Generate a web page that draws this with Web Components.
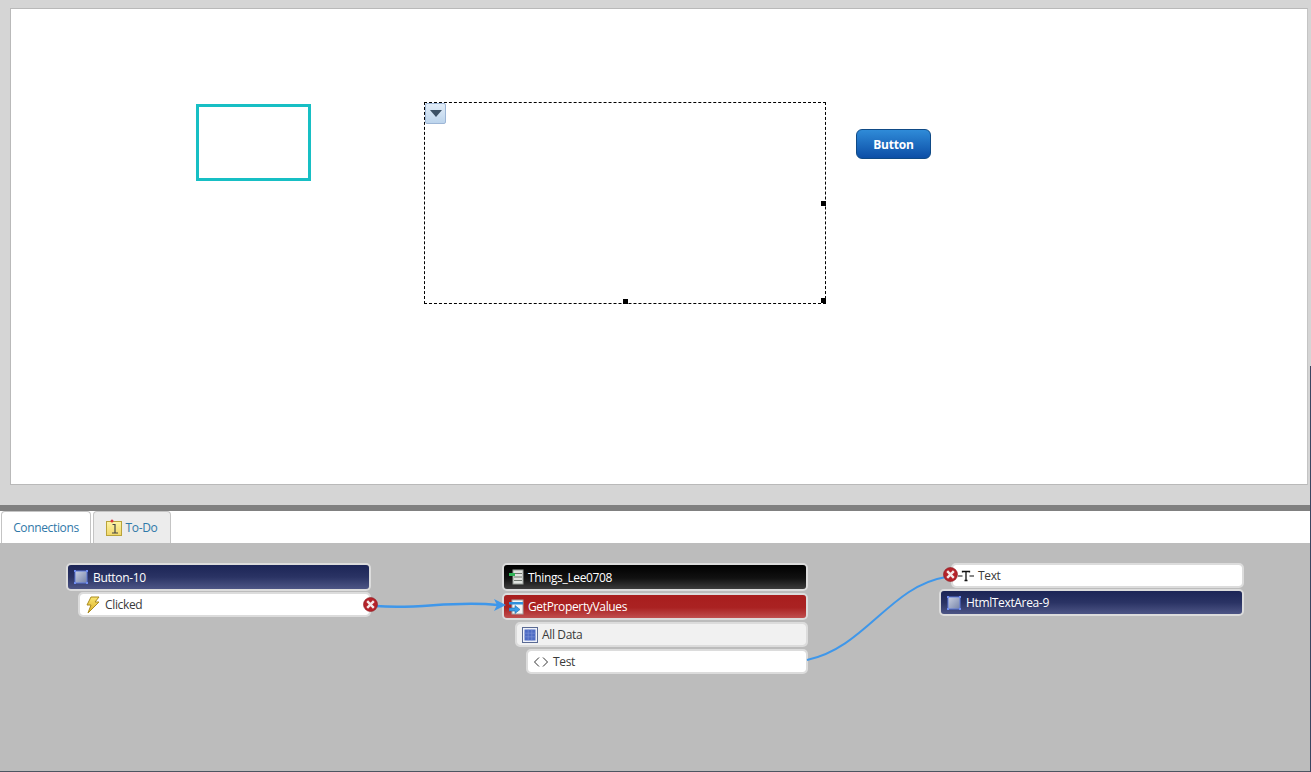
<!DOCTYPE html>
<html>
<head>
<meta charset="utf-8">
<title>Mashup Builder</title>
<style>
  html, body { margin: 0; height: 100%; }
  body { font-family: "Open Sans", "Liberation Sans", sans-serif; overflow: hidden; }
</style>
</head>
<body>

<app-shell>
  <design-surface slot="top"></design-surface>
  <tab-strip slot="tabs"></tab-strip>
  <connection-board slot="bottom"></connection-board>
</app-shell>

<script>
// gradient ids only resolve inside the same shadow tree, so each root gets its own copy
const defs = `<svg width="0" height="0" style="position:absolute"><defs>
  <linearGradient id="glass" x1="0" y1="0" x2="1" y2="1"><stop offset="0" stop-color="#c9d0e2"/><stop offset="1" stop-color="#7583a8"/></linearGradient>
  <linearGradient id="bolt" x1="0" y1="0" x2="0" y2="1"><stop offset="0" stop-color="#f9e672"/><stop offset="1" stop-color="#dcae22"/></linearGradient>
  <linearGradient id="note" x1="0" y1="0" x2="0" y2="1"><stop offset="0" stop-color="#fdf3a6"/><stop offset="1" stop-color="#f0d668"/></linearGradient>
</defs></svg>`;

const widgetIcon = `<svg width="16" height="16" viewBox="0 0 16 16"><rect x="2" y="2" width="12" height="12" fill="url(#glass)" stroke="#5d78d8" stroke-width="1"/><g fill="#6f8cf0"><rect x="1" y="1" width="2" height="2"/><rect x="13" y="1" width="2" height="2"/><rect x="1" y="13" width="2" height="2"/><rect x="13" y="13" width="2" height="2"/></g></svg>`;
const boltIcon = `<svg width="16" height="18" viewBox="0 0 16 18"><path d="M6 1 L14 1 L10 6 L14 6 L3 17 L6 9 L2 9 Z" fill="url(#bolt)" stroke="#a98a20" stroke-width="1" stroke-linejoin="round"/></svg>`;
const thingIcon = `<svg width="16" height="16" viewBox="0 0 16 16"><rect x="4" y="1" width="10" height="14" fill="#dfe3df" stroke="#9a9f9a"/><path d="M5 4.5h8M5 8h8M5 11.5h8" stroke="#6f766f"/><rect x="0" y="4" width="6" height="3" fill="#2fb457"/></svg>`;
const serviceIcon = `<svg width="16" height="16" viewBox="0 0 16 16"><rect x="3" y="1" width="11" height="14" fill="#f4f4f4" stroke="#a5a5a5"/><rect x="0" y="3" width="14" height="2.5" fill="#2f8fdc"/><path d="M0 9h6V6.5l5 4-5 4V12H0z" fill="#3a9be6" stroke="#1d6cab" stroke-width=".6"/></svg>`;
const dataIcon = `<svg width="16" height="16" viewBox="0 0 16 16"><rect x=".5" y=".5" width="15" height="15" fill="#eef1f8" stroke="#5a6a94"/><rect x="2.5" y="2.5" width="11" height="11" fill="#4f6cc4"/><path d="M2.5 6.2h11M2.5 9.8h11M6.2 2.5v11M9.8 2.5v11" stroke="#7f95d8" stroke-width=".6"/></svg>`;
const codeIcon = `<svg width="16" height="12" viewBox="0 0 16 12"><path d="M6 1.5 L1.5 6 L6 10.5 M10 1.5 L14.5 6 L10 10.5" fill="none" stroke="#333" stroke-width="1"/></svg>`;
const textIcon = `<svg width="16" height="12" viewBox="0 0 16 12"><path d="M0 6h4.5M11.5 6h4.5" stroke="#111" stroke-width="1.1"/><path d="M4.5 2.5v-1h7v1M8 1.5V10M6.5 10.5h3" fill="none" stroke="#111" stroke-width="1.3"/></svg>`;
const errorIcon = `<svg width="15" height="15" viewBox="0 0 15 15"><circle cx="7.5" cy="7.5" r="7" fill="#b4232a" stroke="#8c1a20" stroke-width=".6"/><path d="M4.2 4.2 L10.8 10.8 M10.8 4.2 L4.2 10.8" stroke="#f4eaea" stroke-width="2.4"/></svg>`;

class AppShell extends HTMLElement {
  constructor() {
    super();
    this.attachShadow({ mode: "open" }).innerHTML = `
      <style>
        :host { display: flex; flex-direction: column; height: 772px; width: 1311px; position: relative; }
        .sizer { border-top: 6px solid #808080; height: 0; flex: none; }
        .edge { position: absolute; right: 0; top: 366px; bottom: 0; width: 1px; background: #3a4560; }
        .foot { height: 1px; background: #4d5662; flex: none; }
      </style>
      <slot name="top"></slot>
      <div class="sizer"></div>
      <slot name="tabs"></slot>
      <slot name="bottom"></slot>
      <div class="foot"></div>
      <div class="edge"></div>
    `;
  }
}

class DesignSurface extends HTMLElement {
  constructor() {
    super();
    this.attachShadow({ mode: "open" }).innerHTML = `
      <style>
        :host { display: block; height: 505px; flex: none; box-sizing: border-box; background: #d5d5d5; padding: 8px 3px 20px 10px; }
        .paper { position: relative; height: 100%; box-sizing: border-box; background: #fff; border: 1px solid #b9b9b9; border-right-color: #c4c4c4; }
        .panel { position: absolute; left: 185px; top: 95px; width: 115px; height: 77px; box-sizing: border-box; border: 3px solid #17bfc4; }
        .selected { position: absolute; left: 413px; top: 93px; width: 402px; height: 202px; box-sizing: border-box; border: 1px dashed #000; }
        .menu { position: absolute; left: 0; top: 0; width: 21px; height: 21px; box-sizing: border-box; border: 1px solid #9db6d6; border-radius: 2px; background: linear-gradient(#e2edf8, #bcd4ec); display: flex; align-items: center; justify-content: center; }
        .menu i { width: 0; height: 0; border-left: 6px solid transparent; border-right: 6px solid transparent; border-top: 7px solid #3c5166; }
        .grip { position: absolute; width: 5px; height: 5px; background: #000; }
        .btn { position: absolute; left: 845px; top: 120px; width: 75px; height: 30px; box-sizing: border-box; border: 1px solid #0f4a86; border-radius: 6px; background: linear-gradient(#2f8bd8, #0c4ea6); color: #fff; font: bold 12px "Open Sans", "Liberation Sans", sans-serif; letter-spacing: -.2px; display: flex; align-items: center; justify-content: center; }
      </style>
      <div class="paper">
        <div class="panel"></div>
        <div class="selected">
          <div class="menu"><i></i></div>
          <div class="grip" style="right:-1px;top:98px"></div>
          <div class="grip" style="left:198px;bottom:-1px"></div>
          <div class="grip" style="right:-1px;bottom:0"></div>
        </div>
        <div class="btn">Button</div>
      </div>
    `;
  }
}

class TabStrip extends HTMLElement {
  constructor() {
    super();
    this.attachShadow({ mode: "open" }).innerHTML = `
      <style>
        :host { display: flex; height: 32px; flex: none; background: #fff; box-sizing: border-box; padding-left: 1px; gap: 2px; font: 12px "Open Sans", "Liberation Sans", sans-serif; letter-spacing: -.35px; color: #2f78a8; }
        .tab { box-sizing: border-box; height: 32px; border: 1px solid #c4c4c4; border-bottom: 0; border-radius: 4px 4px 0 0; display: flex; align-items: center; justify-content: center; gap: 3px; }
        .on { width: 90px; background: #fff; }
        .off { width: 78px; background: #ececec; padding-right: 1px; }
      </style>
      ${defs}
      <div class="tab on">Connections</div>
      <div class="tab off">
        <svg width="17" height="17" viewBox="0 0 17 17"><rect x=".5" y="2.5" width="15" height="14" fill="url(#note)" stroke="#b9a33a"/><circle cx="6" cy="2" r="1.5" fill="#d8343a"/><path d="M6.5 5.5h2.5v8M6 14h6" fill="none" stroke="#444" stroke-width="1.2"/></svg>
        To-Do
      </div>
    `;
  }
}

class ConnRow extends HTMLElement {
  constructor() {
    super();
    this.attachShadow({ mode: "open" }).innerHTML = `
      <style>
        :host { display: block; box-sizing: border-box; flex: none; height: var(--h, 25px); margin-left: var(--indent, 0); border: 2px solid #dcdcdc; border-radius: 5px; font: 12px "Open Sans", "Liberation Sans", sans-serif; letter-spacing: -.35px; }
        .in { height: 100%; box-sizing: border-box; border-radius: 3px; display: flex; align-items: center; gap: 4px; padding-left: 5px; white-space: nowrap; overflow: hidden; }
        :host([kind=widget]) .in { background: linear-gradient(#1c2556 0%, #2a3364 50%, #4d5585 100%); color: #fff; }
        :host([kind=thing]) .in { background: linear-gradient(#000 0%, #111 55%, #3c3c3c 100%); color: #fff; gap: 3px; }
        :host([kind=service]) .in { background: linear-gradient(#a81e1e 0%, #aa2222 55%, #c04f4f 100%); color: #fff; gap: 3px; }
        :host([kind=group]) .in { background: #f1f1f1; color: #3a3a3a; }
        :host([kind=plain]) .in { background: #fff; color: #3a3a3a; }
      </style>
      <div class="in"><slot name="icon"></slot><slot></slot></div>
    `;
  }
}

class ConnGroup extends HTMLElement {
  constructor() {
    super();
    this.attachShadow({ mode: "open" }).innerHTML = `
      <style>
        :host { display: flex; flex-direction: column; gap: var(--gap, 2px); position: absolute; width: 305px; }
      </style>
      <slot></slot>
    `;
  }
}

class ConnectionBoard extends HTMLElement {
  constructor() {
    super();
    this.attachShadow({ mode: "open" }).innerHTML = `
      <style>
        :host { display: block; flex: 1; position: relative; background: #bcbcbc; overflow: hidden; }
        .wires { position: absolute; left: 0; top: 0; }
        .err { position: absolute; width: 15px; height: 15px; display: block; }
        .err svg { display: block; }
        span[slot=icon] { display: flex; align-items: center; }
      </style>
      ${defs}
      <conn-group style="left:66px;top:20px;--gap:1px">
        <conn-row kind="widget" style="--h:28px"><span slot="icon">${widgetIcon}</span>Button-10</conn-row>
        <conn-row kind="plain" style="--indent:12px;--h:25px"><span slot="icon">${boltIcon}</span>Clicked</conn-row>
      </conn-group>
      <conn-group style="left:502px;top:20px;width:306px">
        <conn-row kind="thing" style="--h:28px"><span slot="icon">${thingIcon}</span>Things_Lee0708</conn-row>
        <conn-row kind="service" style="--h:27px"><span slot="icon">${serviceIcon}</span>GetPropertyValues</conn-row>
        <conn-row kind="group" style="--indent:13px;--h:25px"><span slot="icon">${dataIcon}</span>All Data</conn-row>
        <conn-row kind="plain" style="--indent:24px;--h:25px"><span slot="icon">${codeIcon}</span>Test</conn-row>
      </conn-group>
      <conn-group style="left:939px;top:20px;--gap:1px">
        <conn-row kind="plain" style="--indent:12px;--h:25px"><span slot="icon">${textIcon}</span>Text</conn-row>
        <conn-row kind="widget" style="--h:27px"><span slot="icon">${widgetIcon}</span>HtmlTextArea-9</conn-row>
      </conn-group>
      <svg class="wires" width="1311" height="228" viewBox="0 543 1311 228" fill="none">
        <path d="M376 606 C 420 610, 450 600, 498 605" stroke="#3f97ea" stroke-width="2.4"/>
        <path d="M494 599 L506 605 L494 611 L497 605 Z" fill="#3f97ea"/>
        <path d="M807 660 C 865 648, 890 586, 946 577" stroke="#3f97ea" stroke-width="2"/>
      </svg>
      <span class="err" style="left:363px;top:54px">${errorIcon}</span>
      <span class="err" style="left:943px;top:24px">${errorIcon}</span>
    `;
  }
}

customElements.define("app-shell", AppShell);
customElements.define("design-surface", DesignSurface);
customElements.define("tab-strip", TabStrip);
customElements.define("conn-row", ConnRow);
customElements.define("conn-group", ConnGroup);
customElements.define("connection-board", ConnectionBoard);
</script>
</body>
</html>
